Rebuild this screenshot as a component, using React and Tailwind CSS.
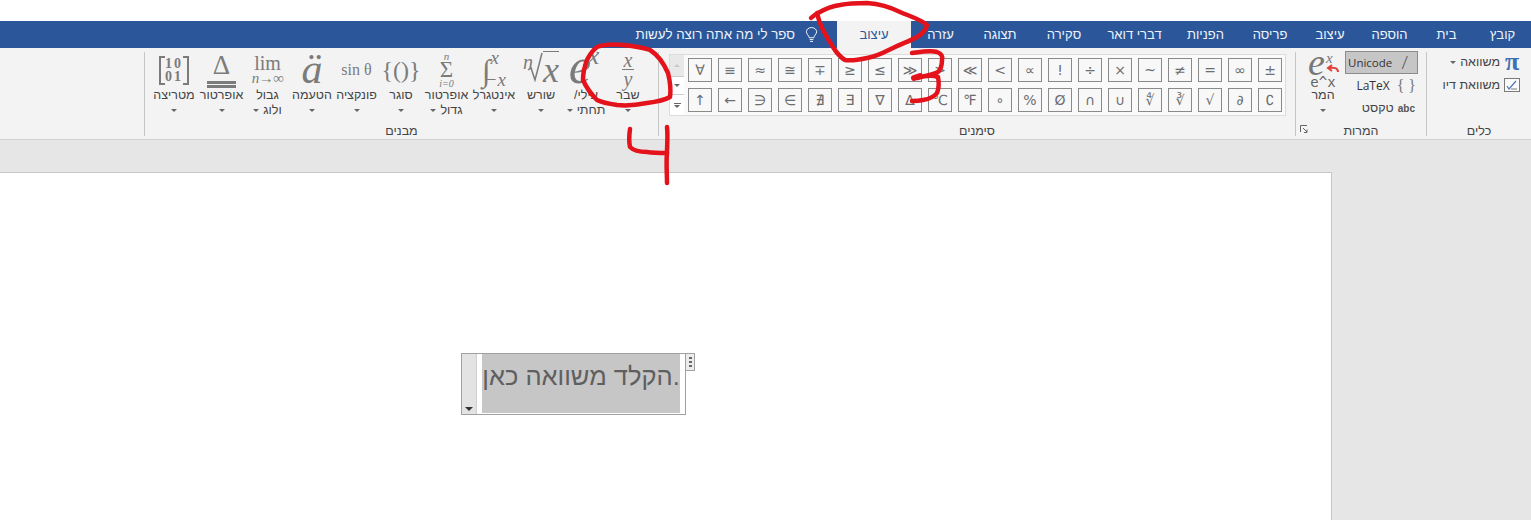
import React from "react";

const tabs = [
  ["קובץ", "w-[57px]"],
  ["בית", "w-[55px]"],
  ["הוספה", "w-[59px]"],
  ["עיצוב", "w-[60px]"],
  ["פריסה", "w-[60px]"],
  ["הפניות", "w-[69px]"],
  ["דברי דואר", "w-[73px]"],
  ["סקירה", "w-[68px]"],
  ["תצוגה", "w-[60px]"],
  ["עזרה", "w-[59px]"],
];

const symbols = [
  "±", "∞", "=", "≠", "~", "×", "÷", "!", "∝", "<", "≪", ">", "≫", "≤", "≥", "∓", "≅", "≈", "≡", "∀",
  "∁", "∂", "√", "∛", "∜", "∪", "∩", "Ø", "%", "∘", "℉", "℃", "∆", "∇", "∃", "∄", "∈", "∋", "←", "↑",
];

const Caret = ({ className = "" }) => (
  <span className={`inline-block w-0 h-0 border-x-[3px] border-x-transparent border-t-[3px] border-t-[#666666] ${className}`} />
);

const MathText = ({ className = "", children }) => (
  <span dir="ltr" className={`font-['Liberation_Serif',serif] text-[#7b7b7b] leading-none ${className}`}>
    {children}
  </span>
);

const BigButton = ({ width, icon, line1, line2 }) => (
  <div className={`${width} flex flex-col items-center shrink-0`}>
    <div className="h-[36px] w-full flex items-center justify-center" dir="ltr">{icon}</div>
    <div className="h-[15px] leading-[15px] whitespace-nowrap text-[12.5px]">{line1}</div>
    {line2 ? (
      <div className="h-[15px] leading-[15px] whitespace-nowrap text-[12.5px] flex items-center gap-[4px]">
        <span>{line2}</span>
        <Caret />
      </div>
    ) : (
      <div className="h-[15px] flex items-center"><Caret /></div>
    )}
  </div>
);

const Group = ({ width, label, launcher, children }) => (
  <div className={`${width} h-[84px] mt-[4px] shrink-0 flex flex-col border-l border-l-[#c6c6c6]`}>
    <div className="flex-1 flex min-h-0">{children}</div>
    <div className="relative h-[13px] leading-[16px] text-center text-[12.5px] text-[#444444]">
      {label}
      {launcher && (
        <svg className="absolute left-[4px] top-[2px]" width="8" height="8" viewBox="0 0 8 8" fill="none" stroke="#666666">
          <path d="M0.5 7V0.5H7" />
          <path d="M3 3L7 7M7 4.5V7.5H4" />
        </svg>
      )}
    </div>
  </div>
);

const Symbol = ({ ch }) => (
  <div dir="ltr" className="w-[24px] h-[24px] border border-[#8a8a8a] bg-[#f8f8f8] flex items-center justify-center font-['DejaVu_Sans',sans-serif] text-[14px] text-[#6d6d6d] leading-none">
    {ch}
  </div>
);

const RedMarks = () => (
  <svg className="absolute left-0 top-0 pointer-events-none" width="1531" height="520" fill="none" stroke="#e3121b" strokeWidth="4.5" strokeLinecap="round" strokeLinejoin="round">
    <path d="M811 18C814 15 816 14 818 13C825 9 832 6 840 5C850 3 858 3 867 3C880 4 892 8 900 12C912 17 922 20 927 25C926 30 922 34 917 37C910 41 901 44 893 48C885 52 876 57 867 58C858 60 851 61 845 60C840 57 836 52 833 47C829 41 826 36 823 30C820 24 818 18 817 13" />
    <path d="M912 53C920 52 930 50 937 52C942 54 943 57 942 60C942 65 941 69 938 72C932 75 924 76 917 78C924 76 932 75 938 77C939 82 939 88 937 93C934 97 929 99 923 100C919 101 915 101 912 101" />
    <path d="M914 78L920 76" strokeWidth="6" />
    <path d="M587 60C590 54 593 50 597 47C605 44 614 44 623 45C633 46 642 47 650 50C658 55 664 64 668 73C670 81 671 90 670 97C663 101 655 102 647 103C637 105 627 106 617 105C610 104 603 103 597 100C591 94 586 87 583 80C583 72 585 65 587 60" />
    <path d="M630 129C629 136 629 142 630 147C634 151 640 152 647 152C654 153 660 153 667 153" />
    <path d="M667 127C668 136 667 145 667 153C666 163 667 173 667 183" />
  </svg>
);

const App = () => {
  return (
    <div className="relative h-screen overflow-hidden bg-white font-['Liberation_Sans',sans-serif] text-[#444444]">
      <div className="h-[21px] bg-white" />

      {/* tabs */}
      <div dir="rtl" className="h-[27px] bg-[#2b579a] flex text-[13px] text-[#f0f4fa]">
        {tabs.map(([name, width], i) => (
          <div key={i} className={`${width} flex items-center justify-center shrink-0`}>{name}</div>
        ))}
        <div className="w-[74px] shrink-0 bg-[#f3f3f3] text-[#2b579a] flex items-center justify-center">עיצוב</div>
        <div className="w-[19px] shrink-0" />
        <div className="flex items-center gap-[10px]">
          <svg width="13" height="17" viewBox="0 0 14 17" fill="none" stroke="#ffffff" strokeWidth="1">
            <path d="M4.5 12C4.5 9.5 1.5 8.5 1.5 5.5C1.5 3 4 1 7 1C10 1 12.5 3 12.5 5.5C12.5 8.5 9.5 9.5 9.5 12Z" />
            <path d="M5 14H9M5.5 16H8.5" />
          </svg>
          <span className="whitespace-nowrap text-[13.3px]">ספר לי מה אתה רוצה לעשות</span>
        </div>
      </div>

      {/* ribbon */}
      <div dir="rtl" className="h-[92px] bg-[#f3f3f3] border-b border-b-[#d2d2d2] flex text-[#444444]">
        <Group width="w-[105px]" label="כלים">
          <div className="flex flex-col pr-[11px] text-[12.5px]">
            <div className="h-[24px] flex items-center gap-[4px] mt-[-2px]">
              <span className="w-[16px] text-center font-['Liberation_Serif',serif] font-bold text-[26px] leading-none text-[#3f6fb0]">π</span>
              <span>משוואה</span>
              <Caret />
            </div>
            <div className="h-[22px] flex items-center gap-[4px]">
              <svg width="16" height="14" viewBox="0 0 16 14" fill="none">
                <rect x="0.5" y="0.5" width="15" height="13" fill="#fbfbfb" stroke="#7a7a7a" />
                <path d="M3 8L5 11L12 3" stroke="#4a78b5" strokeWidth="1.2" />
                <path d="M7 11H13" stroke="#7a7a7a" />
              </svg>
              <span className="whitespace-nowrap">משוואת דיו</span>
            </div>
          </div>
        </Group>

        <Group width="w-[131px]" label="המרות" launcher>
          <div className="w-[81px] shrink-0 pr-[8px] flex flex-col text-[12.5px]">
            <div dir="ltr" className="h-[23px] -mt-[1px] border border-[#8c8c8c] bg-[#c6c6c6] flex items-center justify-between pl-[2px] pr-[9px] font-['Open_Sans',sans-serif] text-[11.5px] text-[#333333] shrink-0">
              <span>Unicode</span>
              <span className="text-[19px] font-light leading-none text-[#555555]">/</span>
            </div>
            <div dir="ltr" className="h-[23px] flex items-center justify-end gap-[7px] pr-[2px] font-['Open_Sans',sans-serif] text-[12px] text-[#333333] shrink-0">
              <span>LaTeX</span>
              <span className="font-['Liberation_Serif',serif] text-[16px] leading-none text-[#777777]">{"{ }"}</span>
            </div>
            <div className="h-[23px] flex items-center gap-[4px] pr-[3px] shrink-0">
              <span className="text-[10px] text-[#555555] font-bold">abc</span>
              <span>טקסט</span>
            </div>
          </div>
          <div className="w-[44px] shrink-0 -mt-[1px] flex flex-col items-center">
            <div dir="ltr" className="relative h-[25px] w-[30px] flex items-start">
              <MathText className="italic text-[38px] -mt-[8px] text-[#777777]">e</MathText>
              <MathText className="italic text-[15px] ml-[1px] text-[#777777]">x</MathText>
              <svg className="absolute right-[-1px] top-[13px]" width="13" height="9" viewBox="0 0 13 9" fill="none" stroke="#e0403a" strokeWidth="2">
                <path d="M12 8C12 4 8 3 3 4M6 1L2 4L6 7" />
              </svg>
            </div>
            <div dir="ltr" className="h-[12px] leading-[12px] text-[14px] font-['DejaVu_Sans_Mono',monospace] text-[#666666]">e^x</div>
            <div className="h-[15px] leading-[15px] text-[12.5px]">המר</div>
            <div className="h-[15px] flex items-center"><Caret /></div>
          </div>
        </Group>

        <Group width="w-[637px]" label="סימנים">
          <div className="mr-[9px] mt-[2px] h-[62px] w-[617px] bg-[#fafafa] border border-[#dcdcdc] flex shrink-0">
            <div className="grid grid-cols-[repeat(20,24px)] gap-[6px] pr-[3px] pt-[3px] content-start">
              {symbols.map((ch, i) => (
                <Symbol key={i} ch={ch} />
              ))}
            </div>
            <div className="w-[14px] mr-[4px] flex flex-col shrink-0">
              <div className="h-[21px] bg-[#e8e8e8] flex items-center justify-center">
                <span className="w-0 h-0 border-x-[3px] border-x-transparent border-b-[3px] border-b-[#c8c8c8]" />
              </div>
              <div className="h-[19px] border-y border-y-[#cccccc] bg-white flex items-center justify-center"><Caret /></div>
              <div className="flex-1 bg-white flex flex-col items-center justify-center gap-[1px]">
                <span className="w-[7px] h-px bg-[#666666]" />
                <Caret />
              </div>
            </div>
          </div>
        </Group>

        <Group width="w-[514px]" label="מבנים">
          <div className="w-[10px] shrink-0" />
          <BigButton
            width="w-[40px]"
            line1="שבר"
            icon={
              <MathText className="italic text-[20px] flex flex-col items-center">
                <span className="leading-[15px]">x</span>
                <span className="w-[12px] h-px bg-[#7b7b7b] my-[1px]" />
                <span className="leading-[16px]">y</span>
              </MathText>
            }
          />
          <BigButton
            width="w-[44px]"
            line1="עילי/"
            line2="תחתי"
            icon={
              <span className="flex items-start -ml-[4px]">
                <MathText className="italic text-[50px] -mt-[8px]">e</MathText>
                <MathText className="italic text-[26px] -ml-[3px] -mt-[6px]">x</MathText>
              </span>
            }
          />
          <BigButton
            width="w-[46px]"
            line1="שורש"
            icon={
              <span className="flex items-start">
                <MathText className="italic text-[20px] -mr-[6px]">n</MathText>
                <svg width="16" height="30" viewBox="0 0 16 30" fill="none" stroke="#7b7b7b" strokeWidth="1.5" className="shrink-0">
                  <path d="M1 18L4 16L8 28L15 1" />
                </svg>
                <MathText className="italic text-[36px] border-t border-t-[#7b7b7b] -mt-px leading-[28px]">x</MathText>
              </span>
            }
          />
          <BigButton
            width="w-[48px]"
            line1="אינטגרל"
            icon={
              <span className="flex items-center">
                <MathText className="text-[31px]">∫</MathText>
                <span className="flex flex-col items-start">
                  <MathText className="italic text-[19px] leading-[17px] -mt-[4px]">x</MathText>
                  <MathText className="italic text-[19px] leading-[17px] mt-[3px] -ml-[6px] whitespace-nowrap">−x</MathText>
                </span>
              </span>
            }
          />
          <BigButton
            width="w-[47px]"
            line1="אופרטור"
            line2="גדול"
            icon={
              <MathText className="flex flex-col items-center">
                <span className="italic text-[11px] leading-[8px]">n</span>
                <span className="text-[23px] leading-[19px]">Σ</span>
                <span className="italic text-[10px] leading-[9px]">i=0</span>
              </MathText>
            }
          />
          <BigButton width="w-[44px]" line1="סוגר" icon={<MathText className="text-[24px]">{"{()}"}</MathText>} />
          <BigButton width="w-[45px]" line1="פונקציה" icon={<MathText className="text-[16px]">sin θ</MathText>} />
          <BigButton width="w-[44px]" line1="הטעמה" icon={<MathText className="italic text-[42px] -mt-[2px]">ä</MathText>} />
          <BigButton
            width="w-[45px]"
            line1="גבול"
            line2="ולוג"
            icon={
              <MathText className="flex flex-col items-center">
                <span className="text-[20px] leading-[17px]">lim</span>
                <span className="italic text-[15px] leading-[13px] whitespace-nowrap tracking-[-0.5px]">n→∞</span>
              </MathText>
            }
          />
          <BigButton
            width="w-[47px]"
            line1="אופרטור"
            icon={
              <span className="flex flex-col items-center">
                <MathText className="text-[27px] leading-[22px]">Δ</MathText>
                <span className="w-[29px] h-[3px] bg-[#7b7b7b] mt-[2px]" />
                <span className="w-[29px] h-[3px] bg-[#7b7b7b] mt-px" />
              </span>
            }
          />
          <BigButton
            width="w-[48px]"
            line1="מטריצה"
            icon={
              <span className="relative flex flex-col justify-center h-[29px] w-[30px] font-['Liberation_Serif',serif] font-bold text-[14px] leading-[13px] text-[#7b7b7b] text-center">
                <svg className="absolute left-0 top-0" width="30" height="29" viewBox="0 0 30 29" fill="none" stroke="#7b7b7b" strokeWidth="2">
                  <path d="M6 1H1V28H6M24 1H29V28H24" />
                </svg>
                <span className="tracking-[2px]">10</span>
                <span className="tracking-[2px]">01</span>
              </span>
            }
          />
        </Group>
      </div>

      <div className="h-[32px] bg-[#e6e6e6]" />

      {/* document */}
      <div className="flex h-[348px] bg-[#e6e6e6]">
        <div className="w-[1332px] shrink-0 bg-white border-t border-r border-[#c6c6c6] pt-[180px] pl-[461px]">
          <div dir="ltr" className="relative w-[225px] h-[62px] border border-[#a0a0a0] flex bg-white">
            <div className="w-[15px] bg-[#e3e3e3] border-r border-r-[#cfcfcf] flex items-end justify-center pb-[3px] shrink-0">
              <span className="w-0 h-0 border-x-[4px] border-x-transparent border-t-[4px] border-t-[#333333]" />
            </div>
            <div className="w-[198px] h-[59px] ml-[5px] bg-[#c6c6c6] text-[#5f5f5f] text-[25.5px] whitespace-nowrap leading-[44px] text-center">
              הקלד משוואה כאן.
            </div>
            <div className="absolute -right-[10px] -top-px w-[10px] h-[18px] border border-[#a0a0a0] bg-[#ececec] flex flex-col items-center justify-center gap-[2px]">
              <span className="w-[3px] h-[2px] bg-[#666666]" />
              <span className="w-[3px] h-[2px] bg-[#666666]" />
              <span className="w-[3px] h-[2px] bg-[#666666]" />
            </div>
          </div>
        </div>
      </div>

      <RedMarks />
    </div>
  );
};

export default App;
